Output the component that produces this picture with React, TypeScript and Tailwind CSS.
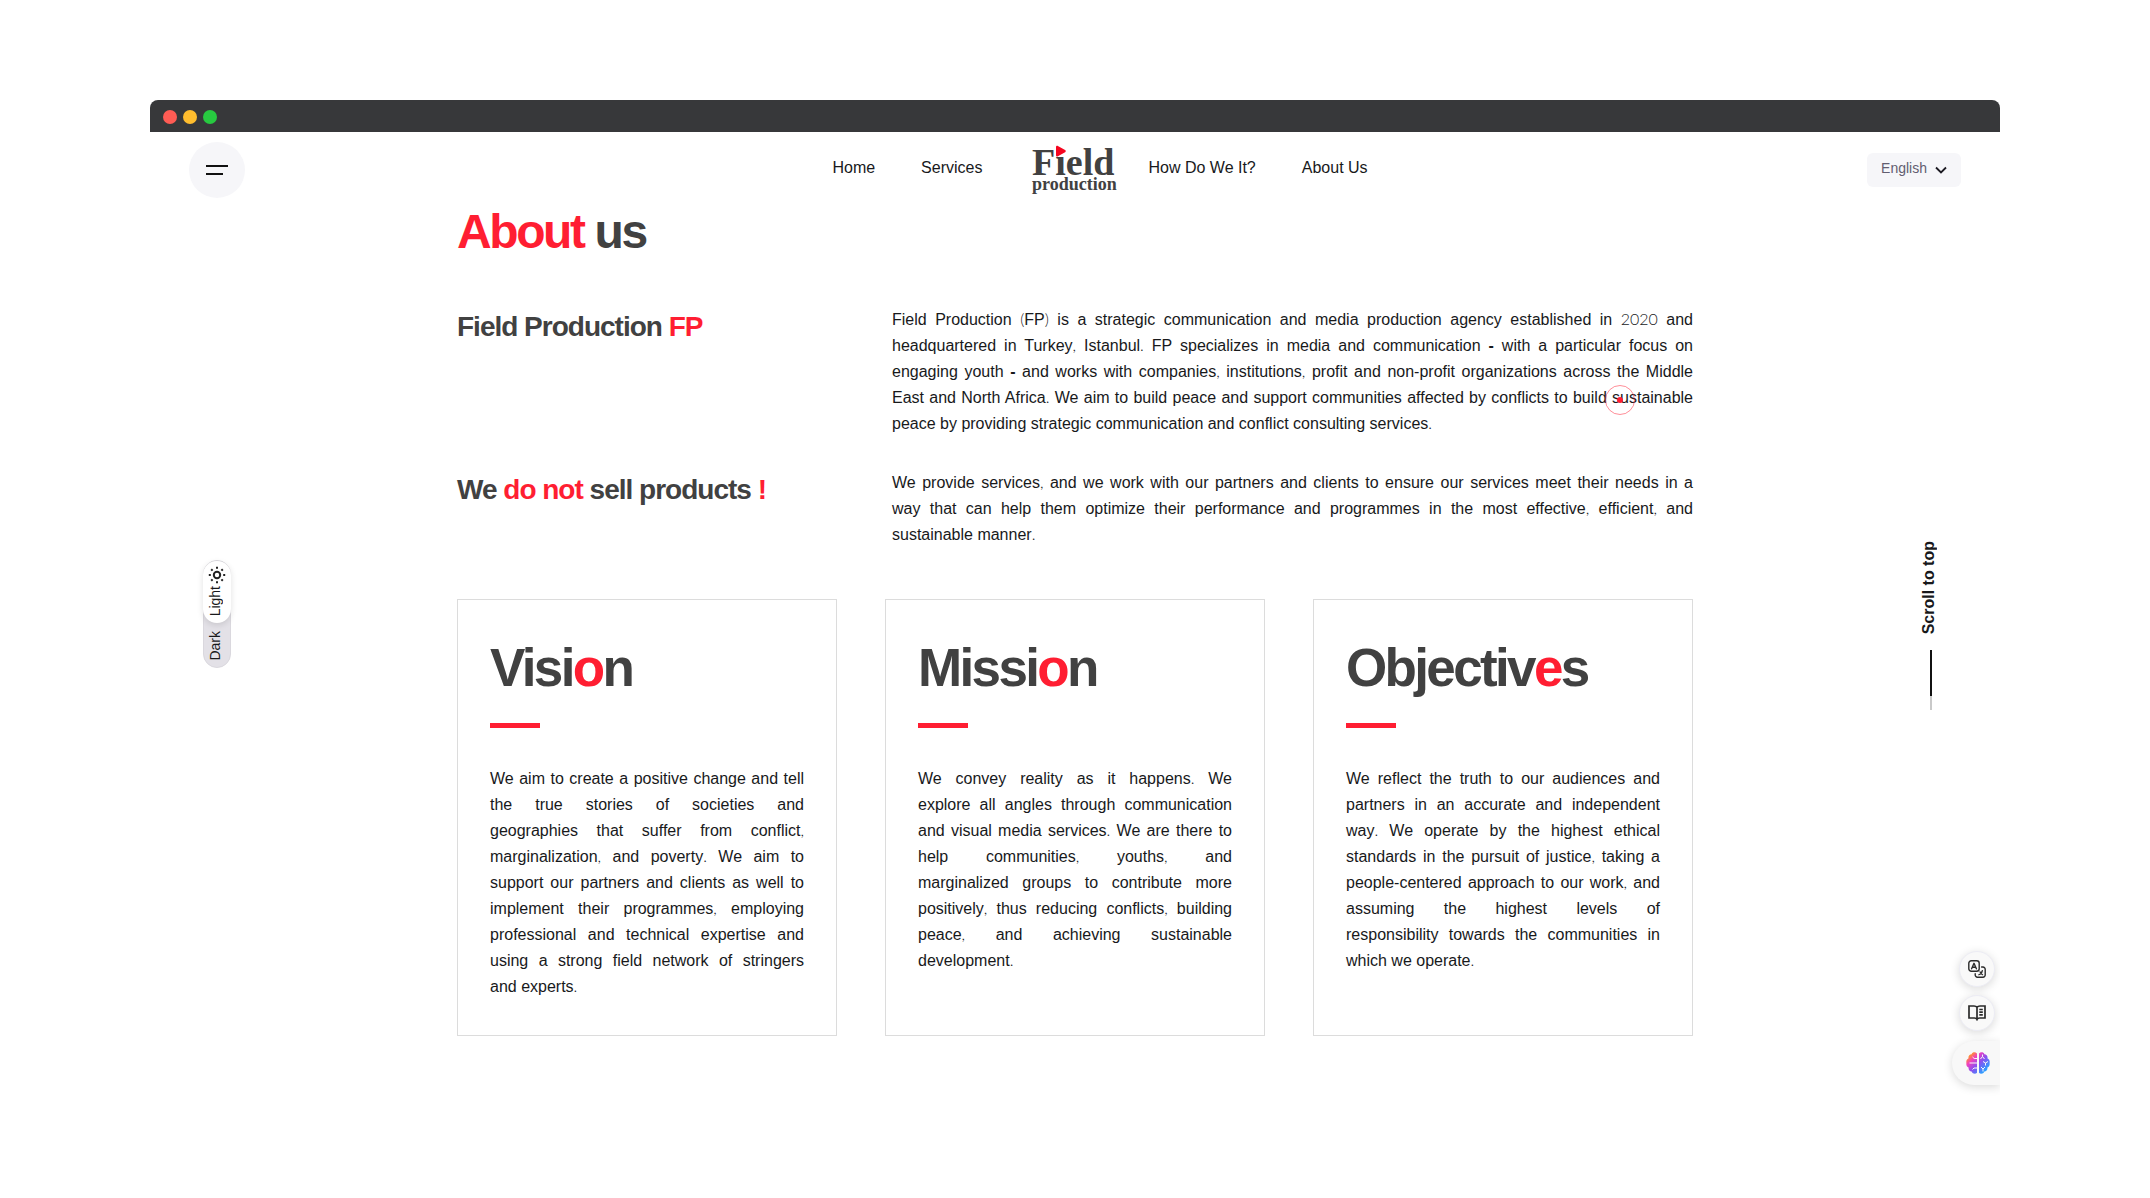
import React, { Fragment, ReactNode } from 'react';

/** Sets digits, punctuation and dashes in the secondary face. */
function Copy({ children }: { children: string }) {
  const parts = children.split(/([.,()]|\d+| - )/);
  return (
    <>
      {parts.map((part, i) => {
        if (i % 2 === 0) return <Fragment key={i}>{part}</Fragment>;
        return part === ' - ' ? (
          <b key={i} className="leading-none"> - </b>
        ) : (
          <span key={i} className="font-['Lato'] font-light leading-none">{part}</span>
        );
      })}
    </>
  );
}

function Red({ children }: { children: ReactNode }) {
  return <span className="text-[#ff1e32]">{children}</span>;
}

function Logo() {
  return (
    <svg viewBox="0 0 90 60" className="h-[60px] w-[90px]" role="img" aria-label="Field production">
      <g fill="#414141" fontFamily="'Liberation Serif', serif" fontWeight="700">
        <text x="2" y="39" fontSize="38">Fıeld</text>
        <text x="2" y="54" fontSize="18">production</text>
      </g>
      <path d="M26 11c0-1 1-1.600 1.900-1.100l7.200 4.100c.9.500.9 1.700 0 2.200l-7.200 4.100c-.9.500-1.900 0-1.900-1.100z" fill="#f5051f" />
    </svg>
  );
}

function Header() {
  const link = 'text-base leading-6 text-[#18191b]';
  return (
    <header className="grid grid-cols-[1fr_auto_1fr] items-start px-[39px]">
      <button aria-label="Open menu" className="mt-[10px] flex size-14 flex-col items-start justify-center gap-[6px] rounded-full bg-[#f6f6f9] pl-[17px]">
        <span className="h-[2px] w-[22px] bg-[#111]" />
        <span className="h-[2px] w-[17px] bg-[#111]" />
      </button>
      <nav className="flex items-start pl-[50px] pt-6">
        <a href="#home" className={link}>Home</a>
        <a href="#services" className={link + ' ml-[46px]'}>Services</a>
        <a href="#home" className="-mt-5 ml-12"><Logo /></a>
        <a href="#how" className={link + ' ml-7'}>How Do We It?</a>
        <a href="#about" className={link + ' ml-[46px]'}>About Us</a>
      </nav>
      <button className="mt-[21px] flex h-[34px] items-center gap-2 justify-self-end rounded-md bg-[#f6f6f9] px-[14px] pb-1 text-sm text-[#625d70]">
        English
        <svg viewBox="0 0 12 8" className="mt-1 h-2 w-3" fill="none" stroke="#1c1a22" strokeWidth="1.800"><path d="M1 1.500l5 5 5-5" /></svg>
      </button>
    </header>
  );
}

const body = 'text-justify text-base leading-[26px] text-[#18191b]';

function Row({ title, children }: { title: ReactNode; children: string }) {
  return (
    <div className="grid grid-cols-[435px_1fr]">
      <h2 className="text-[28px] font-bold leading-10 tracking-[-1px] text-[#414141]">{title}</h2>
      <p className={body}><Copy>{children}</Copy></p>
    </div>
  );
}

function Card({ title, children }: { title: ReactNode; children: string }) {
  return (
    <article className="min-h-[437px] border border-[#dcdcdc] px-8 pt-9 pb-8">
      <h3 className="text-[53px] font-bold leading-[64px] tracking-tighter text-[#414141]">{title}</h3>
      <div className="mt-[23px] h-[5px] w-[50px] bg-[#ff1e32]" />
      <p className={body + ' mt-[38px]'}><Copy>{children}</Copy></p>
    </article>
  );
}

function ThemeToggle() {
  return (
    <button aria-label="Switch theme" className="absolute left-[53px] top-[460px] flex w-7 flex-col items-center rounded-full border border-[#dad8de] bg-[#e3e1e7] text-sm leading-4 text-[#18191b]">
      <span className="flex h-[62px] w-7 flex-col items-center gap-[2px] rounded-full bg-white pt-[5px] shadow-[0_2px_6px_rgba(0,0,0,0.12)]">
        <svg viewBox="0 0 18 18" className="size-[18px] shrink-0" fill="none" stroke="#222" strokeWidth="2">
          <circle cx="9" cy="9" r="3.200" />
          <path d="M9 .8v2M9 15.200v2M.8 9h2M15.200 9h2M3.200 3.200l1.400 1.400M13.400 13.400l1.400 1.400M3.200 14.800l1.400-1.400M13.400 4.600l1.400-1.400" />
        </svg>
        <span className="mr-1 rotate-180 [writing-mode:vertical-rl]">Light</span>
      </span>
      <span className="mr-1 rotate-180 pt-[6px] pb-2 [writing-mode:vertical-rl]">Dark</span>
    </button>
  );
}

function ScrollToTop() {
  return (
    <a href="#top" className="absolute right-[57px] top-[441px] flex flex-col items-center gap-4 text-[#18191b]">
      <span className="mr-1 rotate-180 text-base font-bold leading-5 [writing-mode:vertical-rl]">Scroll to top</span>
      <span className="flex h-[60px] w-[2px] flex-col bg-[#c9c9c9]"><span className="h-[46px] bg-[#111]" /></span>
    </a>
  );
}

function Tools() {
  const round = 'mr-[5px] flex size-9 items-center justify-center rounded-full border border-[#ececf4] bg-[#f9f9f9] shadow-[0_2px_10px_rgba(0,0,0,0.15)]';
  return (
    <div className="absolute right-0 top-[841px] flex flex-col items-end gap-2 overflow-hidden pt-[10px] pb-4 pl-4">
      <button aria-label="Translate" className={round}>
        <svg viewBox="0 0 18 18" className="size-[18px]" fill="none" stroke="#2b2b2b" strokeWidth="1.400" strokeLinecap="round" strokeLinejoin="round">
          <rect x=".8" y=".8" width="10.400" height="10.400" rx="2.500" />
          <path d="M3.600 8.800L6 3.300l2.400 5.500M4.400 7.200h3.200" />
          <path d="M13.600 7h1.400a2.200 2.200 0 012.200 2.200V15a2.200 2.200 0 01-2.200 2.200H9.400A2.200 2.200 0 017.200 15v-1.200" />
          <path d="M10.800 14.800c1.800-.6 3.100-2 3.600-4.300M12 11.800c.5 1.300 1.400 2.300 2.600 2.900" strokeWidth="1.200" />
        </svg>
      </button>
      <button aria-label="Read" className={round}>
        <svg viewBox="0 0 18 16" className="h-4 w-[18px]" fill="none" stroke="#2b2b2b" strokeWidth="1.700">
          <path d="M9 2.300C8.300 1.300 7.200 1 6 1H1v12h5.500c1.200 0 2 .4 2.500 1.500.5-1.100 1.300-1.500 2.500-1.500H17V1h-5c-1.200 0-2.300.3-3 1.300zM9 2.300v12.200M11.300 4.500h3.500M11.300 7.200h3.500M11.300 9.900h3.500" />
        </svg>
      </button>
      <button aria-label="Assistant" className="mt-[2px] flex h-11 w-12 items-center justify-center rounded-l-full bg-[#f8f8f8] pl-1 shadow-[0_2px_10px_rgba(0,0,0,0.15)]">
        <svg viewBox="0 0 24 22" className="h-[22px] w-6">
          <defs>
            <linearGradient id="brain" gradientUnits="userSpaceOnUse" x1="3" y1="1" x2="21" y2="20">
              <stop offset="0" stopColor="#ff9a1f" />
              <stop offset=".1" stopColor="#ff8a3a" />
              <stop offset=".28" stopColor="#f13fc0" />
              <stop offset=".55" stopColor="#8a50f0" />
              <stop offset=".9" stopColor="#2f9dff" />
            </linearGradient>
          </defs>
          <path fill="url(#brain)" d="M11 1.500C9.500-.3 6.300 0 5.600 2.200 3.300 2.300 2 4.300 2.600 6.300.8 7.200 0 9 .4 10.900c-.4 2.200.5 4 2.200 4.700-.3 2.200 1 3.900 3 4 .9 2.300 3.900 3 5.400 1.200zM13 1.500c1.500-1.800 4.700-1.500 5.400.7 2.300.1 3.600 2.100 3 4.100 1.800.9 2.600 2.700 2.200 4.600.4 2.200-.5 4-2.200 4.700.3 2.200-1 3.900-3 4-.9 2.300-3.900 3-5.400 1.200z" />
          <path fill="none" stroke="#f8f8f8" strokeWidth="1" d="M11 6.500H8.200L6.500 5M11 11H3.500M11 16H8l-1.500 1.500M14.500 7l2-2.500 2 2.500M16.500 2.500v2M17 9.500l2.500 1.500L22 9.500M19.500 11v2.500M15 15l2 2 2-2M17 17v2.500" />
        </svg>
      </button>
    </div>
  );
}

export default function App() {
  return (
    <div className="min-h-screen bg-white px-[150px] pt-[100px] font-['Liberation_Sans',sans-serif]">
      <div id="top" className="relative">
        <div className="flex h-8 items-center gap-[6px] rounded-t-lg bg-[#37383a] pl-[13px] pt-[2px]">
          <span className="size-[14px] rounded-full bg-[#ff5c54]" />
          <span className="size-[14px] rounded-full bg-[#ffbd2e]" />
          <span className="size-[14px] rounded-full bg-[#27c940]" />
        </div>
        <Header />
        <main className="mx-auto max-w-[1236px] pt-[6px]">
          <h1 className="text-[48px] font-bold leading-[56px] tracking-tighter text-[#414141]"><Red>About</Red> us</h1>
          <section className="mt-[47px] flex flex-col gap-[33px]">
            <Row title={<>Field Production <Red>FP</Red></>}>
              {'Field Production (FP) is a strategic communication and media production agency established in 2020 and headquartered in Turkey, Istanbul. FP specializes in media and communication - with a particular focus on engaging youth - and works with companies, institutions, profit and non-profit organizations across the Middle East and North Africa. We aim to build peace and support communities affected by conflicts to build sustainable peace by providing strategic communication and conflict consulting services.'}
            </Row>
            <Row title={<>We <Red>do not</Red> sell products <Red>!</Red></>}>
              {'We provide services, and we work with our partners and clients to ensure our services meet their needs in a way\u00a0that can help them optimize their performance and programmes in the most effective, efficient, and sustainable\u00a0manner.'}
            </Row>
          </section>
          <section className="mt-[51px] grid grid-cols-3 gap-12">
            <Card title={<>Visi<Red>o</Red>n</>}>
              {'We aim to create a positive change and tell the true stories of societies and geographies\u00a0that suffer from conflict, marginalization, and poverty. We aim to support our partners and clients as well to implement their programmes, employing professional and technical expertise and using\u00a0a\u00a0strong field network of stringers and\u00a0experts.'}
            </Card>
            <Card title={<>Missi<Red>o</Red>n</>}>
              {'We convey reality as it happens. We explore all angles through communication and visual media services. We are there to help communities, youths, and marginalized\u00a0groups to contribute more positively, thus reducing conflicts, building peace, and achieving sustainable development.'}
            </Card>
            <Card title={<>Objectiv<Red>e</Red>s</>}>
              {'We reflect the truth to our audiences and partners in an accurate and independent way. We operate by the highest ethical standards in the pursuit of justice, taking a people-centered approach to our work, and assuming the highest levels of responsibility\u00a0towards the communities in which\u00a0we\u00a0operate.'}
            </Card>
          </section>
        </main>
        <ThemeToggle />
        <ScrollToTop />
        <Tools />
        <div className="pointer-events-none absolute left-[1455px] top-[285px] flex size-[30px] items-center justify-center rounded-full border border-[#ff1e32]/50">
          <span className="size-[6px] rounded-full bg-[#ff1e32]" />
        </div>
      </div>
    </div>
  );
}
